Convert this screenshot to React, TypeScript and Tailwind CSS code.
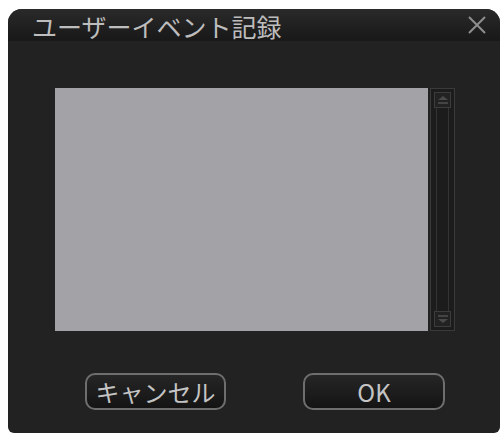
import React from 'react'

const font = { fontFamily: '"Noto Sans CJK JP", "Liberation Sans", sans-serif' }

const ScrollBar = () => (
  <div className="flex h-full w-[25px] flex-col border border-[#3a3a3a] bg-[#1c1c1c] p-[3px]">
    <div className="flex h-[16px] flex-col items-center justify-center gap-[2px] border border-[#3c3c3c] bg-[#222]">
      <div className="h-0 w-0 border-x-[5px] border-b-[4px] border-x-transparent border-b-[#4a4a4a]" />
      <div className="h-[2px] w-[10px] bg-[#444]" />
    </div>
    <div className="mx-[2px] flex-1 border-x border-[#333]" />
    <div className="flex h-[16px] flex-col items-center justify-center gap-[2px] border border-[#3c3c3c] bg-[#222]">
      <div className="h-[2px] w-[10px] bg-[#444]" />
      <div className="h-0 w-0 border-x-[5px] border-t-[4px] border-x-transparent border-t-[#4a4a4a]" />
    </div>
  </div>
)

const DialogButton = ({ label, width }: { label: string; width: string }) => (
  <button
    className={`flex h-[37px] ${width} items-center justify-center rounded-[10px] border-2 border-[#6e6e6e] bg-gradient-to-b from-[#262626] to-[#141414] text-[24px] leading-[30px] text-[#c4c4c4]`}
    style={font}
  >
    {label}
  </button>
)

export default function App() {
  return (
    <div className="h-[437px] w-[503px] overflow-hidden bg-white pl-[8px] pt-[9px]">
      <div className="flex h-[424px] w-[492px] flex-col overflow-hidden rounded-t-[14px] rounded-b-[6px] bg-[#222222]">
        <div className="flex h-[32px] shrink-0 items-center justify-between bg-gradient-to-b from-[#2a2a2a] to-[#181818] pl-[24px] pr-[12px]">
          <span className="mt-[3px] text-[25px] leading-[29px] text-[#bdbdbd]" style={font}>
            ユーザーイベント記録
          </span>
          <svg width="22" height="22" viewBox="0 0 22 22">
            <path d="M3 3 L19 19 M19 3 L3 19" stroke="#8e8e8e" strokeWidth="2" />
          </svg>
        </div>
        <div className="flex flex-col pl-[47px] pt-[47px]">
          <div className="flex h-[243px] gap-[2px]">
            <div className="w-[373px] bg-[#a3a3a7]" />
            <ScrollBar />
          </div>
          <div className="mt-[42px] flex">
            <div className="ml-[30px]">
              <DialogButton label="キャンセル" width="w-[141px]" />
            </div>
            <div className="ml-[77px]">
              <DialogButton label="OK" width="w-[142px]" />
            </div>
          </div>
        </div>
      </div>
    </div>
  )
}
